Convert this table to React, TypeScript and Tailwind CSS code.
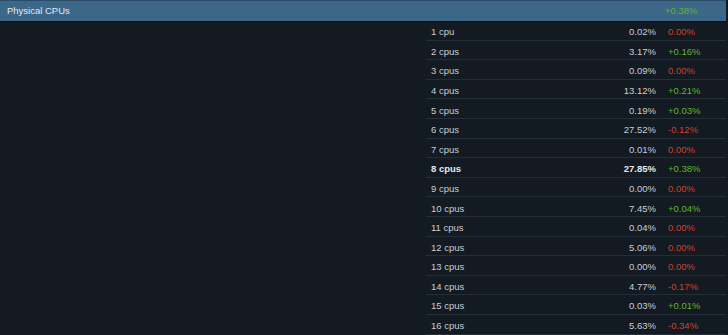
const rows: { label: string; pct: string; change: string; bold?: boolean }[] = [
  { label: "1 cpu", pct: "0.02%", change: "0.00%" },
  { label: "2 cpus", pct: "3.17%", change: "+0.16%" },
  { label: "3 cpus", pct: "0.09%", change: "0.00%" },
  { label: "4 cpus", pct: "13.12%", change: "+0.21%" },
  { label: "5 cpus", pct: "0.19%", change: "+0.03%" },
  { label: "6 cpus", pct: "27.52%", change: "-0.12%" },
  { label: "7 cpus", pct: "0.01%", change: "0.00%" },
  { label: "8 cpus", pct: "27.85%", change: "+0.38%", bold: true },
  { label: "9 cpus", pct: "0.00%", change: "0.00%" },
  { label: "10 cpus", pct: "7.45%", change: "+0.04%" },
  { label: "11 cpus", pct: "0.04%", change: "0.00%" },
  { label: "12 cpus", pct: "5.06%", change: "0.00%" },
  { label: "13 cpus", pct: "0.00%", change: "0.00%" },
  { label: "14 cpus", pct: "4.77%", change: "-0.17%" },
  { label: "15 cpus", pct: "0.03%", change: "+0.01%" },
  { label: "16 cpus", pct: "5.63%", change: "-0.34%" },
];

export default function App() {
  return (
    <div className="min-h-[335px] w-[728px] overflow-hidden bg-[#131a21] font-['Liberation_Sans',Arial,sans-serif] text-[9.5px] text-[#c6ced6]">
      {/* barra de cabecera */}
      <div className="flex h-[21px] w-[726px] items-center border-t border-[#2b4c69] bg-[#3c6789] shadow-[0_1px_0_#0c1117]">
        <span className="pl-[7px] text-[9.5px] text-[#e3e9ef]">Physical CPUs</span>
        <span className="ml-auto w-[61px] text-[#62b532]">+0.38%</span>
      </div>

      <div className="flex">
        <div className="w-[426px]" />
        <div className="w-[300px]">
          {rows.map((r) => (
            <div
              key={r.label}
              className={`flex h-[19.6px] items-center border-b border-[#242e38] pt-[4px] ${
                r.bold ? "font-bold text-[#e4e9ee]" : ""
              }`}
            >
              <span className="w-[150px] pl-[5px]">{r.label}</span>
              <span className="w-[80px] text-right">{r.pct}</span>
              <span
                className={`pl-[12px] font-normal ${
                  r.change.startsWith("+") ? "text-[#62b532]" : "text-[#c8452f]"
                }`}
              >
                {r.change}
              </span>
            </div>
          ))}
        </div>
      </div>
    </div>
  );
}
